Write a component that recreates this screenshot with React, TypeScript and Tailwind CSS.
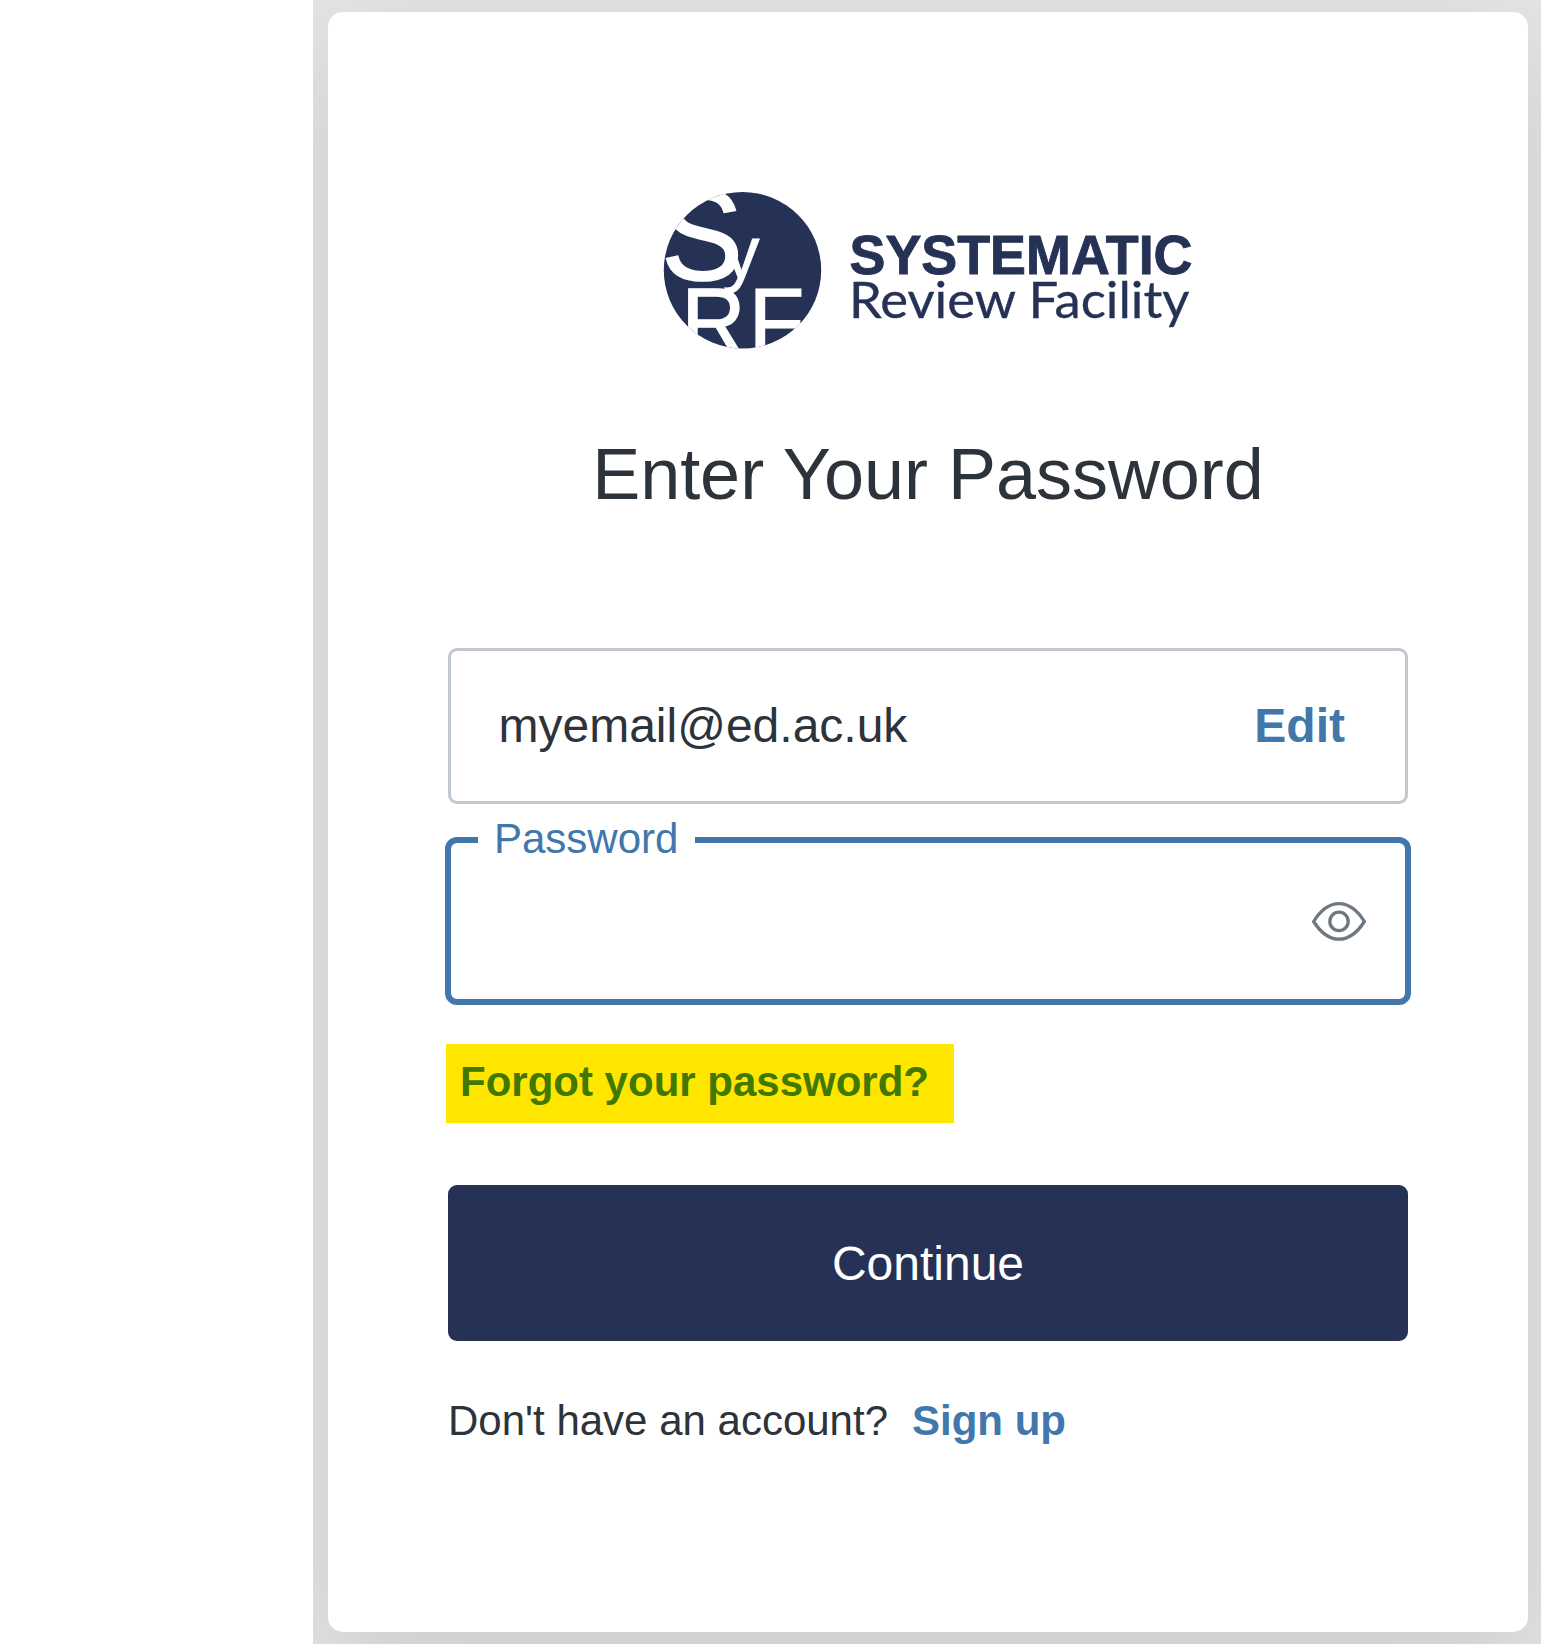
import React from "react";

function Logo() {
  return (
    <svg
      width="530"
      height="160"
      viewBox="662 190 530 160"
      fill="#263255"
      className="block"
      role="img"
      aria-label="SyRF Systematic Review Facility"
    >
      <defs>
        <clipPath id="disc">
          <ellipse cx="742.5" cy="270.2" rx="78.7" ry="78.2" />
        </clipPath>
      </defs>
      <ellipse cx="742.5" cy="270.2" rx="78.7" ry="78.2" />
      <g clipPath="url(#disc)" fill="#fff" stroke="#fff" fontFamily="'Liberation Sans', Arial, sans-serif">
        <text x="661" y="280" fontSize="128" strokeWidth="1.5" textLength="82" lengthAdjust="spacingAndGlyphs">S</text>
        <text x="722.5" y="278" fontSize="74" strokeWidth="0.8">y</text>
        <text x="681.5" y="354" fontSize="95" strokeWidth="1.4" textLength="64" lengthAdjust="spacingAndGlyphs">R</text>
        <text x="748.5" y="354" fontSize="95" strokeWidth="1.2" textLength="56" lengthAdjust="spacingAndGlyphs">F</text>
      </g>
      <text
        x="849.5"
        y="274"
        fontSize="55.5"
        fontWeight="700"
        fontFamily="'Liberation Sans', Arial, sans-serif"
        stroke="#263255"
        strokeWidth="0.9"
        textLength="343"
        lengthAdjust="spacingAndGlyphs"
      >
        SYSTEMATIC
      </text>
      <text
        x="849"
        y="317.6"
        fontSize="50.5"
        fontFamily="Lato, sans-serif"
        stroke="#263255"
        strokeWidth="0.35"
        textLength="340.5"
        lengthAdjust="spacingAndGlyphs"
      >
        Review Facility
      </text>
    </svg>
  );
}

function EyeIcon() {
  return (
    <svg width="54" height="40" viewBox="0 0 54 40" fill="none" stroke="#6f7780" strokeWidth="3.3" className="block">
      <path d="M1.6 20.5C8.6 9.3 16.8 2.6 27 2.6s18.4 6.7 25.4 17.9C45.4 31.4 37.2 38.2 27 38.2S8.6 31.400 1.6 20.5Z" strokeLinejoin="round" />
      <circle cx="27" cy="20.4" r="9.2" />
    </svg>
  );
}

export default function App() {
  return (
    <div className="flex h-[1644px] w-[1541px] overflow-hidden bg-white pl-[313px] font-['Liberation_Sans',Arial,sans-serif] text-[#2d333a]">
      <main className="w-[1228px] overflow-hidden bg-[#e5e5e5] pt-3 pl-[15px]">
        <section className="flex h-[1620px] w-[1200px] flex-col rounded-[15px] bg-white px-[120px] pt-[178px] shadow-[0_36px_120px_rgba(0,0,0,0.12)]">
          <div className="pl-[214px]">
            <Logo />
          </div>
          <h1 className="mt-[79px] text-center text-[72px] leading-[90px] tracking-[-0.04px]">Enter Your Password</h1>

          <div className="mt-[129px] flex h-[156px] items-center justify-between rounded-[9px] border-[3px] border-[#c2c8d0] pr-[60px] pl-[47.5px] text-[48px]">
            <span>myemail@ed.ac.uk</span>
            <a className="font-bold text-[#4177ab]">Edit</a>
          </div>

          <div className="relative -mx-[3px] mt-[33px] flex h-[168px] items-center justify-end rounded-[12px] border-[6px] border-[#4177ab] pr-[39px]">
            <label className="absolute -top-[28px] left-[27px] bg-white pr-[17px] pl-4 text-[42px] leading-[48px] text-[#4177ab]">
              Password
            </label>
            <EyeIcon />
          </div>

          <div className="mt-[39px] -ml-[2px] flex h-[79px] w-[508px] bg-[#ffe600] pt-[14px] pl-[14px] text-[42px] leading-[48px] font-bold text-[#417800]">
            <a>Forgot your password?</a>
          </div>

          <button className="mt-[62px] h-[156px] rounded-[9px] bg-[#263255] pt-[2px] text-[48px] text-white">Continue</button>

          <p className="mt-[56px] flex gap-[24px] text-[42px] leading-[48px]">
            <span>Don't have an account?</span>
            <a className="font-bold text-[#4177ab]">Sign up</a>
          </p>
        </section>
      </main>
    </div>
  );
}
